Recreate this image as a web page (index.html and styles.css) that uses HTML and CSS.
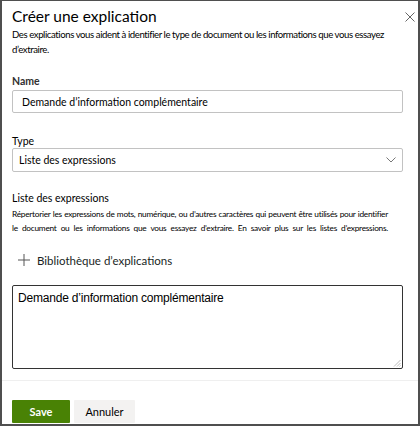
FILE: index.html
```html
<!DOCTYPE html>
<html lang="fr">
<head>
<meta charset="utf-8">
<link rel="stylesheet" href="styles.css">
</head>
<body>
<div class="frame">
  <div class="content">
    <div class="header">
      <h1 class="title">Créer une explication</h1>
      <svg class="close" width="10" height="10" viewBox="0 0 10 10"><path d="M0.5 0.5 L9.5 9.5 M9.5 0.5 L0.5 9.5" stroke="#666" stroke-width="1" fill="none"/></svg>
    </div>
    <p class="intro">Des explications vous aident à identifier le type de document ou les informations que vous essayez d’extraire.</p>

    <div class="label strong">Name</div>
    <div class="field">Demande d’information complémentaire</div>

    <div class="label type-label">Type</div>
    <div class="field select">
      <span>Liste des expressions</span>
      <svg class="chev" width="10" height="6" viewBox="0 0 10 6"><path d="M0.5 0.5 L5 5 L9.5 0.5" stroke="#777" stroke-width="1" fill="none"/></svg>
    </div>

    <div class="sub-title">Liste des expressions</div>
    <p class="small">Répertorier les expressions de mots, numérique, ou d’autres caractères qui peuvent être utilisés pour identifier le document ou les informations que vous essayez d’extraire. En savoir plus sur les listes d’expressions.</p>

    <div class="add">
      <svg width="12" height="12" viewBox="0 0 12 12"><path d="M6 0 V12 M0 6 H12" stroke="#555" stroke-width="1" fill="none"/></svg>
      <span>Bibliothèque d’explications</span>
    </div>

    <div class="textarea">Demande d’information complémentaire
      <svg class="grip" width="8" height="8" viewBox="0 0 8 8"><path d="M7.5 1 L1 7.5 M7.5 4 L4 7.5 M7.5 6.5 L6.5 7.5" stroke="#aaa" stroke-width="0.8" fill="none"/></svg>
    </div>
  </div>
  <div class="footer">
    <button class="btn primary">Save</button>
    <button class="btn secondary">Annuler</button>
  </div>
</div>
</body>
</html>
```
FILE: styles.css
```css
html, body {
  margin: 0;
  padding: 0;
  background: #fff;
}
body {
  width: 420px;
  height: 426px;
  overflow: hidden;
}
.frame {
  box-sizing: border-box;
  width: 420px;
  height: 426px;
  border: 2px solid #4f4f4f;
  border-top-width: 1px;
  font-family: Lato, "Open Sans", sans-serif;
  color: #201f1e;
  display: flex;
  flex-direction: column;
}
.content {
  padding: 0 15px 0 10px;
  flex: 1;
}
.header {
  display: flex;
  justify-content: space-between;
  align-items: flex-start;
  padding-top: 5px;
  height: 20px;
}
.title {
  margin: 0;
  font-weight: 400;
  font-size: 15.5px;
  line-height: 20px;
  color: #000;
}
.close {
  margin-right: -12px;
  margin-top: 6px;
}
.intro {
  margin: 1px 0 0;
  font-size: 9.6px;
  letter-spacing: -0.42px;
  line-height: 15px;
  color: #000;
}
.label {
  font-size: 10.5px;
  line-height: 14px;
  color: #323130;
}
.strong {
  font-weight: 700;
  margin-top: 17px;
}
.field {
  box-sizing: border-box;
  height: 23px;
  margin-top: 2px;
  border: 1px solid #c2c2c2;
  border-radius: 2px;
  padding: 0 9px;
  display: flex;
  align-items: center;
  font-size: 10.5px;
  color: #000;
}
.type-label {
  margin-top: 21px;
  font-weight: 400;
  color: #000;
}
.field.select {
  height: 24px;
  margin-top: 0;
  padding: 0 6px 0 6px;
  justify-content: space-between;
}
.sub-title {
  margin-top: 19px;
  font-size: 10.5px;
  line-height: 14px;
  color: #000;
}
.small {
  margin: 2px 0 0;
  font-size: 8.3px;
  letter-spacing: -0.26px;
  line-height: 14px;
  text-align: justify;
  text-align-last: justify;
  padding-right: 15px;
  color: #000;
}
.add {
  display: flex;
  align-items: center;
  height: 16px;
  margin-top: 17px;
  padding-left: 6px;
  font-size: 11.5px;
  color: #201f1e;
  gap: 7px;
}
.textarea {
  position: relative;
  box-sizing: border-box;
  height: 84px;
  margin-top: 17px;
  border: 1px solid #333;
  border-radius: 2px;
  padding: 4px 5px;
  font-family: "Liberation Sans", Arial, sans-serif;
  font-size: 12px;
  letter-spacing: -0.2px;
  line-height: 16px;
  color: #000;
}
.grip {
  position: absolute;
  right: 1px;
  bottom: 1px;
}
.footer {
  border-top: 1px solid #efefef;
  height: 44px;
  flex: none;
  display: flex;
  align-items: flex-start;
  padding: 19px 0 0 10px;
  box-sizing: border-box;
  gap: 4px;
}
.btn {
  height: 23px;
  border: none;
  border-radius: 1px;
  font-family: Lato, sans-serif;
  font-size: 11px;
  padding: 0;
  margin: 0;
}
.primary {
  width: 58px;
  background: #498205;
  color: #fff;
  font-weight: 700;
}
.secondary {
  width: 61px;
  background: #f3f2f1;
  color: #000;
}
```
